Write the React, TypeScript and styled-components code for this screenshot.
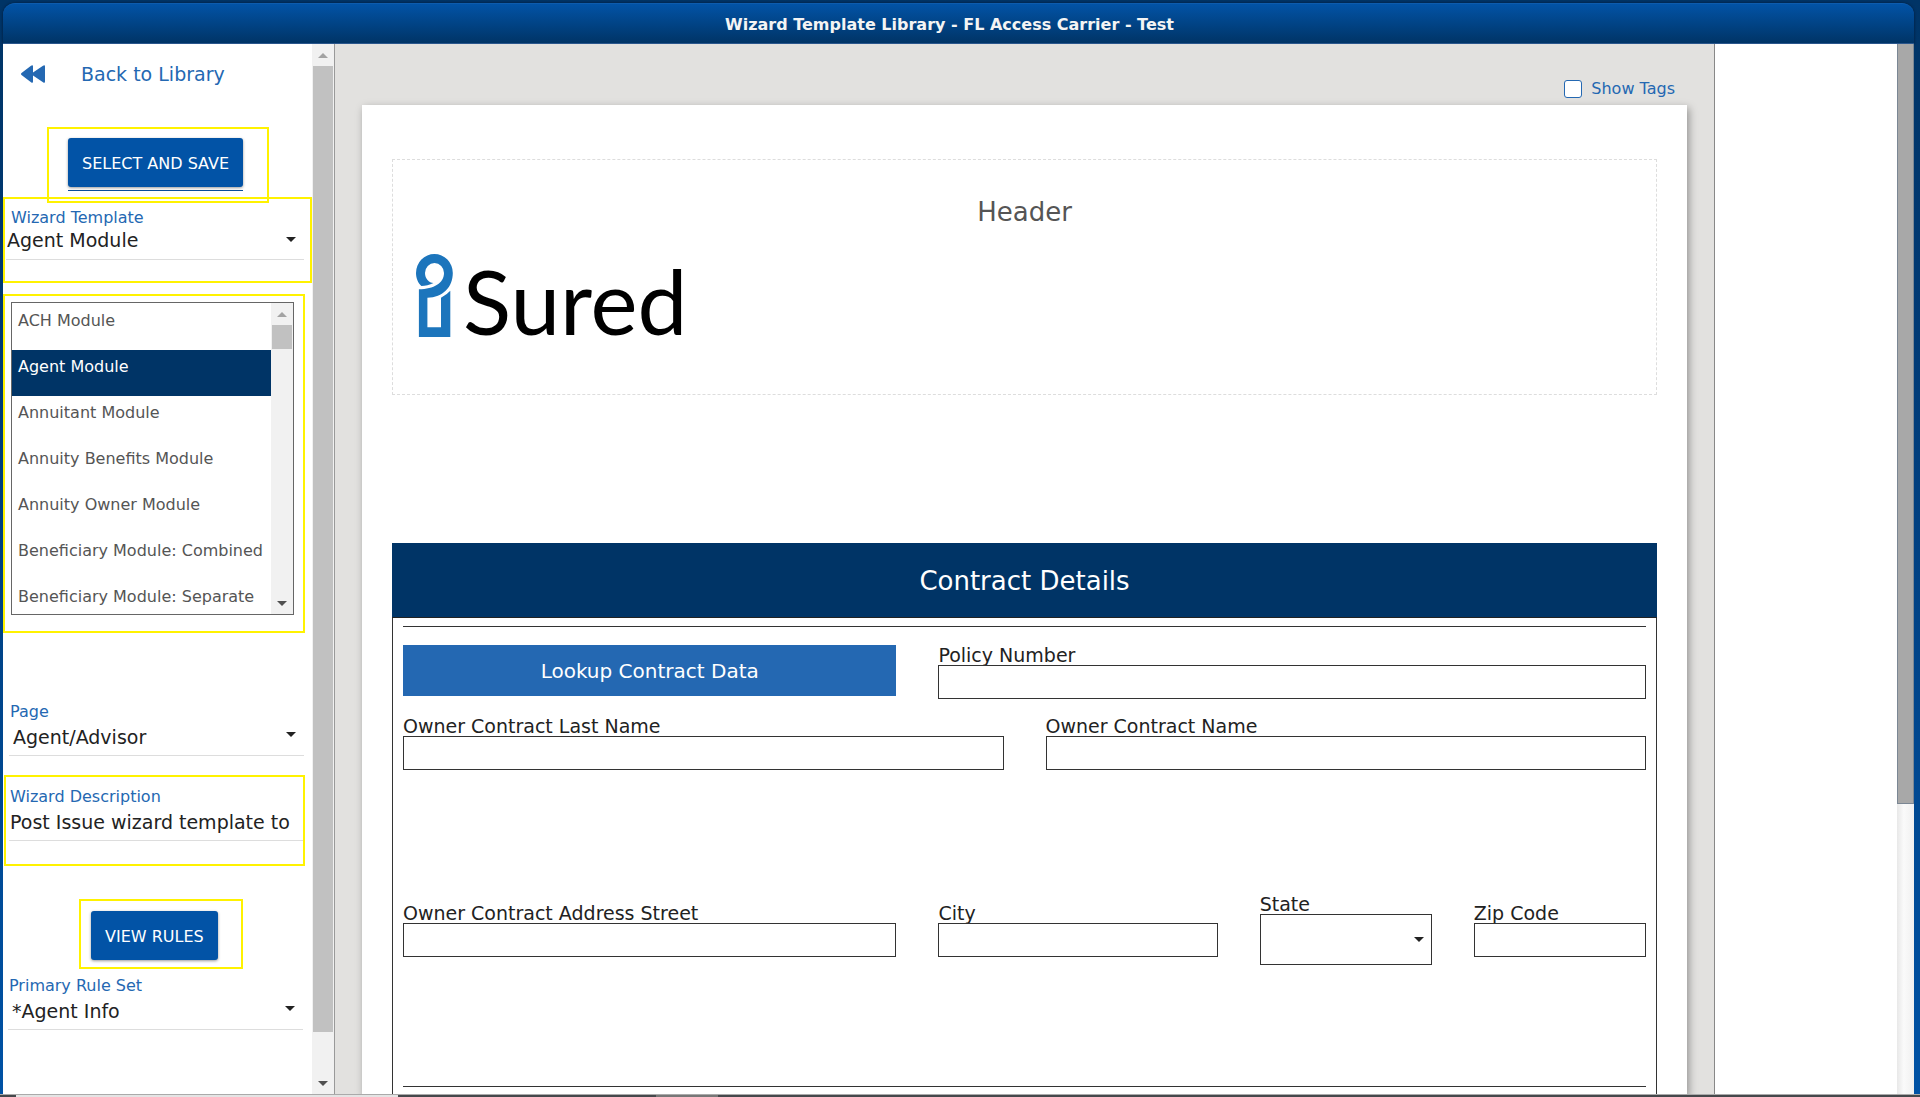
import React, { useState } from "react";
import styled, { createGlobalStyle } from "styled-components";

const GlobalStyle = createGlobalStyle`
  * { box-sizing: border-box; }
  body {
    margin: 0;
    background: #003466;
    color: #222;
    font-family: "DejaVu Sans", Verdana, sans-serif;
    font-size: 16px;
  }
  button, input, select { font: inherit; color: inherit; }
`;

const Frame = styled.div`
  display: flex;
  flex-direction: column;
  height: 100vh;
  padding: 3px 6px 0 3px;
  overflow: hidden;
  background: linear-gradient(#003466, #003a75 30%, #0052a5);
`;

const TitleBar = styled.header`
  flex: none;
  height: 41px;
  padding: 1px 18px 0 0;
  border-top: 1px solid #0d5cae;
  border-bottom: 1px solid #2a568c;
  border-radius: 12px 12px 0 0;
  background: linear-gradient(#0253a6, #003466);
  box-shadow: 0 0 3px #001c3a;
  text-align: center;
`;

const Title = styled.h1`
  margin: 0;
  color: #f4f4f4;
  font-size: 16px;
  font-weight: 700;
  line-height: 40px;
`;

const Body = styled.div`
  display: flex;
  flex: 1;
  min-height: 0;
`;

const StatusStrip = styled.div`
  display: flex;
  flex: none;
  height: 3px;
  margin: 0 -6px 0 -3px;
  border-top: 1px solid #aaa;
  background: #45484b;
`;

const StripPart = styled.span<{ $width: number; $color: string }>`
  width: ${(p) => p.$width}px;
  background: ${(p) => p.$color};
`;

const Sidebar = styled.aside`
  display: flex;
  flex: none;
  width: 332px;
  border-right: 1px solid #999;
  background: #fff;
`;

const SidebarContent = styled.div`
  display: flex;
  flex: 1;
  flex-direction: column;
  min-width: 0;
  overflow: hidden;
`;

const BackLink = styled.a`
  display: flex;
  align-items: center;
  gap: 36px;
  height: 60px;
  margin-bottom: 23px;
  padding-left: 18px;
  color: #2468b2;
  font-size: 19px;
  text-decoration: none;
`;

const Highlight = styled.section<{ $margin: string; $padding: string }>`
  flex: none;
  margin: ${(p) => p.$margin};
  padding: ${(p) => p.$padding};
  border: 2px solid #fff200;
`;

const Plain = styled.section<{ $padding: string }>`
  padding: ${(p) => p.$padding};
`;

const Underlined = styled.div`
  width: max-content;
  padding-bottom: 3px;
  border-bottom: 1px solid #0a4f9c;
`;

const ActionButton = styled.button`
  display: block;
  height: 49px;
  padding: 2px 14px 0;
  border: 0;
  border-radius: 3px;
  background: #0253a6;
  box-shadow: 0 1px 3px rgba(0, 0, 0, 0.4);
  color: #fff;
  font-size: 16px;
  white-space: nowrap;
`;

const SideLabel = styled.label<{ $indent?: number }>`
  display: block;
  padding-left: ${(p) => p.$indent ?? 1}px;
  color: #2468b2;
  font-size: 16px;
  line-height: 20px;
`;

const SelectBox = styled.div<{ $lift?: number }>`
  display: grid;
  align-items: center;
  > * { grid-area: 1 / 1; }
  > svg {
    justify-self: end;
    margin-right: 8px;
    margin-bottom: ${(p) => p.$lift ?? 0}px;
    pointer-events: none;
  }
`;

const SideSelect = styled.select<{ $compact: boolean }>`
  appearance: none;
  width: 100%;
  height: ${(p) => (p.$compact ? 32 : 34)}px;
  padding: ${(p) => (p.$compact ? "0 24px 8px 1px" : "0 24px 4px 4px")};
  border: 0;
  border-bottom: 1px solid #ddd;
  border-radius: 0;
  background: transparent;
  font-size: 19px;
`;

const SideInput = styled.input`
  width: 100%;
  height: 34px;
  padding: 0 12px 4px 1px;
  border: 0;
  border-bottom: 1px solid #ddd;
  background: transparent;
  font-size: 19px;
`;

const ListBox = styled.div`
  display: flex;
  height: 313px;
  border: 1px solid #666;
`;

const List = styled.ul`
  flex: 1;
  margin: 0;
  padding: 1px 0 0;
  overflow: hidden;
  list-style: none;
`;

const ListItem = styled.li<{ $selected: boolean }>`
  height: 46px;
  padding: 7px 0 0 6px;
  background: ${(p) => (p.$selected ? "#003466" : "#fff")};
  color: ${(p) => (p.$selected ? "#fff" : "#555")};
  cursor: pointer;
  line-height: 20px;
  white-space: nowrap;
`;

const Track = styled.div`
  display: flex;
  flex: none;
  flex-direction: column;
  align-items: center;
  width: 22px;
  background: #f1f1f1;
`;

const TrackEnd = styled.div`
  display: grid;
  flex: none;
  place-items: center;
  width: 100%;
  height: 22px;
`;

const Thumb = styled.div<{ $size: string }>`
  flex: none;
  width: 20px;
  height: ${(p) => p.$size};
  margin-bottom: auto;
  background: #c1c1c1;
`;

const Workspace = styled.main`
  display: flex;
  flex: 1;
  flex-direction: column;
  min-width: 0;
  padding: 0 27px;
  overflow: hidden;
  background: #e2e1df;
`;

const TagToggle = styled.label`
  display: flex;
  flex: none;
  align-items: center;
  align-self: flex-end;
  gap: 9px;
  height: 61px;
  padding: 28px 12px 0 0;
  color: #2468b2;
  line-height: 20px;
`;

const Checkbox = styled.input`
  appearance: none;
  width: 18px;
  height: 18px;
  margin: 0;
  border: 1px solid #2468b2;
  border-radius: 3px;
  background: #fff;
  &:checked { background: #2468b2; }
`;

const Sheet = styled.article`
  flex: 1;
  padding: 54px 30px 0;
  background: #fff;
  box-shadow: 2px 3px 8px rgba(0, 0, 0, 0.35);
`;

const HeaderZone = styled.div`
  height: 236px;
  padding: 36px 23px 0;
  border: 1px dashed #ddd;
`;

const ZoneTitle = styled.h2`
  margin: 0;
  color: #555;
  font-size: 26px;
  font-weight: 400;
  line-height: 32px;
  text-align: center;
`;

const Logo = styled.div`
  display: flex;
  align-items: flex-end;
  gap: 10px;
  height: 83px;
  margin-top: 26px;
`;

const LogoText = styled.span`
  color: #000;
  font-family: Lato, "Open Sans", sans-serif;
  font-size: 89px;
  line-height: 72px;
`;

const Contract = styled.section`
  margin-top: 148px;
  padding-bottom: 8px;
  border: solid #333;
  border-width: 0 1px;
`;

const ContractTitle = styled.h2`
  margin: 0 -1px;
  padding-top: 2px;
  border-bottom: 1px solid #222;
  background: #003466;
  color: #fff;
  font-size: 26px;
  font-weight: 400;
  line-height: 72px;
  text-align: center;
`;

const Rows = styled.div`
  margin: 8px 10px 0;
  padding: 18px 0 121px;
  border: solid #333;
  border-width: 1px 0;
`;

const Row = styled.div<{ $top?: number; $center?: boolean }>`
  display: grid;
  grid-template-columns: repeat(12, minmax(0, 1fr));
  column-gap: 42px;
  align-items: ${(p) => (p.$center ? "center" : "start")};
  margin-top: ${(p) => p.$top ?? 0}px;
`;

const LookupButton = styled.button`
  grid-column: span 5;
  height: 51px;
  border: 0;
  background: #2468b2;
  color: #fff;
  font-size: 20px;
`;

const FieldBox = styled.div<{ $span: number }>`
  display: flex;
  flex-direction: column;
  grid-column: span ${(p) => p.$span};
`;

const FieldLabel = styled.label`
  font-size: 19px;
  line-height: 20px;
  white-space: nowrap;
`;

const FieldInput = styled.input`
  width: 100%;
  height: 34px;
  padding: 0 8px;
  border: 1px solid #333;
  background: #fff;
`;

const FieldSelect = styled.select`
  appearance: none;
  width: 100%;
  height: 51px;
  padding: 0 24px 0 8px;
  border: 1px solid #333;
  border-radius: 0;
  background: #fff;
`;

const RightPane = styled.aside`
  display: flex;
  flex: none;
  justify-content: flex-end;
  width: 200px;
  border-left: 1px solid #888;
  background: #fff;
`;

const PageTrack = styled.div`
  width: 17px;
  background: linear-gradient(90deg, #e8e8e8, #fafafa 40%, #f0f0f0);
`;

const PageThumb = styled.div`
  height: 72.4%;
  border: 1px solid #7b8794;
  border-top: 0;
  background: #a8a8a8;
`;

function Caret({ color = "#222", up = false }: { color?: string; up?: boolean }) {
  return (
    <svg width="10" height="5" viewBox="0 0 10 5" aria-hidden="true">
      <path d={up ? "M0 5L5 0L10 5Z" : "M0 0H10L5 5Z"} fill={color} />
    </svg>
  );
}

function Scrollbar({ size }: { size: string }) {
  return (
    <Track aria-hidden="true">
      <TrackEnd><Caret up color="#a3a3a3" /></TrackEnd>
      <Thumb $size={size} />
      <TrackEnd><Caret color="#505050" /></TrackEnd>
    </Track>
  );
}

type DropdownProps = { id: string; label: string; value: string; compact?: boolean };

function SideDropdown({ id, label, value, compact = false }: DropdownProps) {
  return (
    <>
      <SideLabel htmlFor={id} $indent={compact ? 5 : 1}>{label}</SideLabel>
      <SelectBox $lift={9}>
        <SideSelect id={id} $compact={compact}>
          <option>{value}</option>
        </SideSelect>
        <Caret />
      </SelectBox>
    </>
  );
}

function Field({ id, label, span }: { id: string; label: string; span: number }) {
  return (
    <FieldBox $span={span}>
      <FieldLabel htmlFor={id}>{label}</FieldLabel>
      <FieldInput id={id} type="text" />
    </FieldBox>
  );
}

const modules = [
  "ACH Module",
  "Agent Module",
  "Annuitant Module",
  "Annuity Benefits Module",
  "Annuity Owner Module",
  "Beneficiary Module: Combined",
  "Beneficiary Module: Separate",
];

export default function App() {
  const [selected, setSelected] = useState("Agent Module");

  return (
    <>
      <GlobalStyle />
      <Frame>
        <TitleBar>
          <Title>Wizard Template Library - FL Access Carrier - Test</Title>
        </TitleBar>
        <Body>
          <Sidebar>
            <SidebarContent>
              <BackLink href="#library">
                <svg width="24" height="18" viewBox="0 0 24 18" aria-hidden="true">
                  <path
                    d="M10 .8Q12-.6 12 1.500V7.500L22 .8Q24-.6 24 1.500V16.500Q24 18.600 22 17.200L12 10.500V16.500Q12 18.600 10 17.200L.5 10Q-.5 9 .5 8Z"
                    fill="#2468b2"
                  />
                </svg>
                Back to Library
              </BackLink>

              <Highlight $margin="0 43px 0 44px" $padding="9px 0 10px 19px">
                <Underlined>
                  <ActionButton type="button">SELECT AND SAVE</ActionButton>
                </Underlined>
              </Highlight>

              <Highlight $margin="-6px 0 0 0" $padding="9px 6px 21px 1px">
                <SideDropdown id="template" label="Wizard Template" value={selected} compact />
              </Highlight>

              <Highlight $margin="11px 7px 0 0" $padding="6px 9px 16px 6px">
                <ListBox>
                  <List role="listbox" aria-label="Wizard Template">
                    {modules.map((name) => (
                      <ListItem
                        key={name}
                        role="option"
                        aria-selected={name === selected}
                        $selected={name === selected}
                        onClick={() => setSelected(name)}
                      >
                        {name}
                      </ListItem>
                    ))}
                  </List>
                  <Scrollbar size="24px" />
                </ListBox>
              </Highlight>

              <Plain $padding="69px 8px 19px 6px">
                <SideDropdown id="page" label="Page" value="Agent/Advisor" />
              </Plain>

              <Highlight $margin="0 7px 0 1px" $padding="10px 0 23px 3px">
                <SideLabel htmlFor="description">Wizard Description</SideLabel>
                <SideInput id="description" type="text" defaultValue="Post Issue wizard template to" />
              </Highlight>

              <Highlight $margin="33px 69px 0 76px" $padding="10px 0 7px 10px">
                <ActionButton type="button">VIEW RULES</ActionButton>
              </Highlight>

              <Plain $padding="7px 9px 0 5px">
                <SideDropdown id="rules" label="Primary Rule Set" value="*Agent Info" />
              </Plain>
            </SidebarContent>
            <Scrollbar size="92%" />
          </Sidebar>

          <Workspace>
            <TagToggle>
              <Checkbox type="checkbox" />
              Show Tags
            </TagToggle>
            <Sheet>
              <HeaderZone>
                <ZoneTitle>Header</ZoneTitle>
                <Logo>
                  <svg width="37" height="83" viewBox="0 0 37 83" aria-hidden="true">
                    <path
                      d="M5.400 32C2 29 0 24 0 19A18.400 19 0 0 1 36.800 19C36.800 33 27 43.500 11.400 43.700V73.300H25V43.700Q31 40.500 34.300 36.700V83H2.900V35.300C18 35 28 29 28 19A9.500 10 0 0 0 9 19C9 24.500 13 29 17.500 29C13.500 31 9.500 32 5.400 32Z"
                      fill="#1c75bc"
                    />
                  </svg>
                  <LogoText>Sured</LogoText>
                </Logo>
              </HeaderZone>

              <Contract>
                <ContractTitle>Contract Details</ContractTitle>
                <Rows>
                  <Row>
                    <LookupButton type="button">Lookup Contract Data</LookupButton>
                    <Field id="policy" label="Policy Number" span={7} />
                  </Row>
                  <Row $top={17}>
                    <Field id="last-name" label="Owner Contract Last Name" span={6} />
                    <Field id="name" label="Owner Contract Name" span={6} />
                  </Row>
                  <Row $top={124} $center>
                    <Field id="street" label="Owner Contract Address Street" span={5} />
                    <Field id="city" label="City" span={3} />
                    <FieldBox $span={2}>
                      <FieldLabel htmlFor="state">State</FieldLabel>
                      <SelectBox>
                        <FieldSelect id="state" />
                        <Caret />
                      </SelectBox>
                    </FieldBox>
                    <Field id="zip" label="Zip Code" span={2} />
                  </Row>
                </Rows>
              </Contract>
            </Sheet>
          </Workspace>

          <RightPane>
            <PageTrack aria-hidden="true">
              <PageThumb />
            </PageTrack>
          </RightPane>
        </Body>
        <StatusStrip>
          <StripPart $width={16} $color="#45484b" />
          <StripPart $width={382} $color="#e4e4e4" />
          <StripPart $width={258} $color="#45484b" />
          <StripPart $width={62} $color="#777" />
        </StatusStrip>
      </Frame>
    </>
  );
}
